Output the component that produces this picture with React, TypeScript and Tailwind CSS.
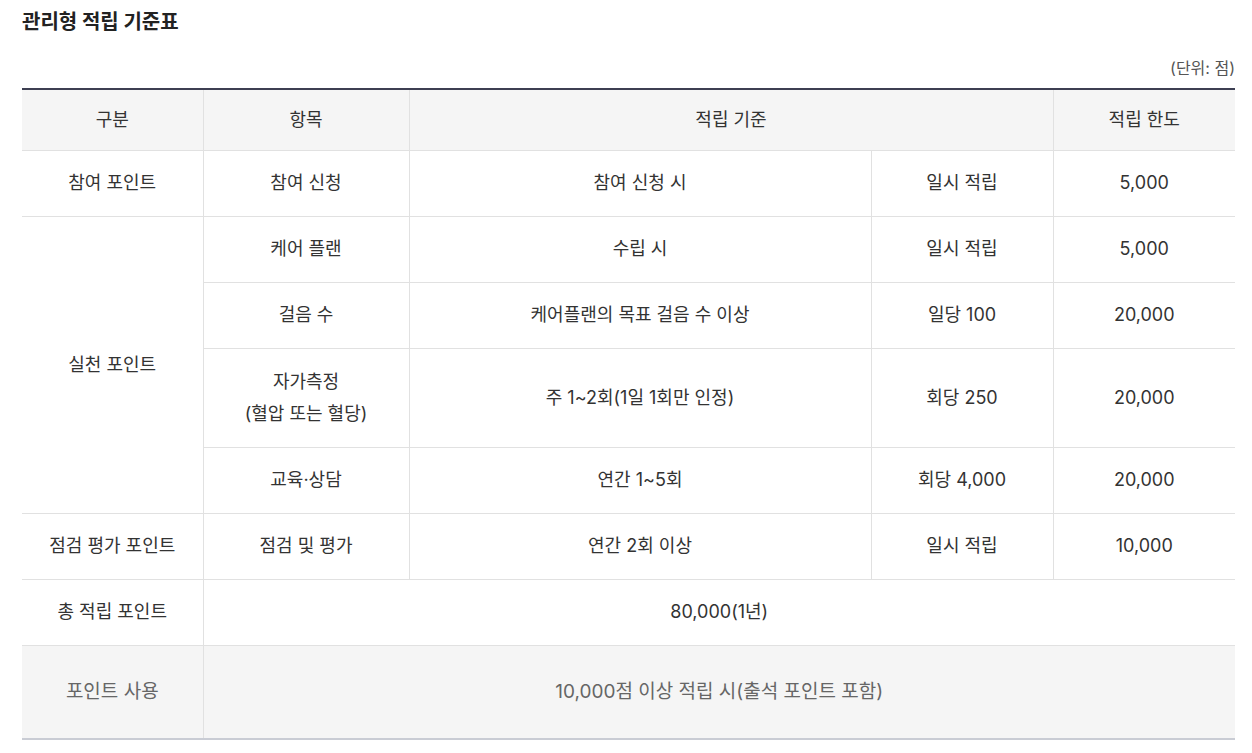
const ROWS = [
  { group: '참여 포인트', span: 1, item: ['참여 신청'], rule: '참여 신청 시', unit: '일시 적립', limit: '5,000', h: 'h-[66px]' },
  { group: '실천 포인트', span: 4, item: ['케어 플랜'], rule: '수립 시', unit: '일시 적립', limit: '5,000', h: 'h-[66px]' },
  { item: ['걸음 수'], rule: '케어플랜의 목표 걸음 수 이상', unit: '일당 100', limit: '20,000', h: 'h-[66px]' },
  { item: ['자가측정', '(혈압 또는 혈당)'], rule: '주 1~2회(1일 1회만 인정)', unit: '회당 250', limit: '20,000', h: 'h-[99px]' },
  { item: ['교육·상담'], rule: '연간 1~5회', unit: '회당 4,000', limit: '20,000', h: 'h-[66px]' },
  { group: '점검 평가 포인트', span: 1, item: ['점검 및 평가'], rule: '연간 2회 이상', unit: '일시 적립', limit: '10,000', h: 'h-[66px]' },
];

const cell = 'border border-[#e1e1e1] text-center align-middle px-3';

export default function App() {
  return (
    <div className="bg-white min-h-[753px] px-[22px] pt-[8px] text-[#333] font-['Inter','Noto_Sans_CJK_KR',sans-serif]">
      <div className="w-[1213px]">
        <h2 className="text-[20px] font-bold leading-[28px] text-[#222]">관리형 적립 기준표</h2>
        <p className="mt-[21px] text-right text-[16px] leading-[22px] text-[#555]">(단위: 점)</p>
        <table className="mt-[9px] w-[1213px] table-fixed border-collapse border-t-2 border-t-[#3d3f52] border-b-2 border-b-[#c9ccd4] text-[18px] leading-[32px]">
          <colgroup>
            <col className="w-[181px]" />
            <col className="w-[206px]" />
            <col className="w-[462px]" />
            <col className="w-[182px]" />
            <col className="w-[182px]" />
          </colgroup>
          <thead>
            <tr className="h-[61px] bg-[#f5f5f5]">
              <th className={`${cell} font-normal border-l-0 border-t-0`}>구분</th>
              <th className={`${cell} font-normal border-t-0`}>항목</th>
              <th colSpan={2} className={`${cell} font-normal border-t-0`}>적립 기준</th>
              <th className={`${cell} font-normal border-r-0 border-t-0`}>적립 한도</th>
            </tr>
          </thead>
          <tbody>
            {ROWS.map((row, i) => (
              <tr key={i} className={row.h}>
                {row.group && (
                  <td rowSpan={row.span} className={`${cell} border-l-0`}>{row.group}</td>
                )}
                <td className={cell}>
                  {row.item.map((line) => <div key={line}>{line}</div>)}
                </td>
                <td className={cell}>{row.rule}</td>
                <td className={cell}>{row.unit}</td>
                <td className={`${cell} border-r-0`}>{row.limit}</td>
              </tr>
            ))}
            <tr className="h-[66px]">
              <td className={`${cell} border-l-0`}>총 적립 포인트</td>
              <td colSpan={4} className={`${cell} border-r-0`}>80,000(1년)</td>
            </tr>
            <tr className="h-[94px] bg-[#f5f5f5] text-[#666] text-[19px]">
              <td className={`${cell} border-l-0 border-b-0`}>포인트 사용</td>
              <td colSpan={4} className={`${cell} border-r-0 border-b-0`}>10,000점 이상 적립 시(출석 포인트 포함)</td>
            </tr>
          </tbody>
        </table>
      </div>
    </div>
  );
}
